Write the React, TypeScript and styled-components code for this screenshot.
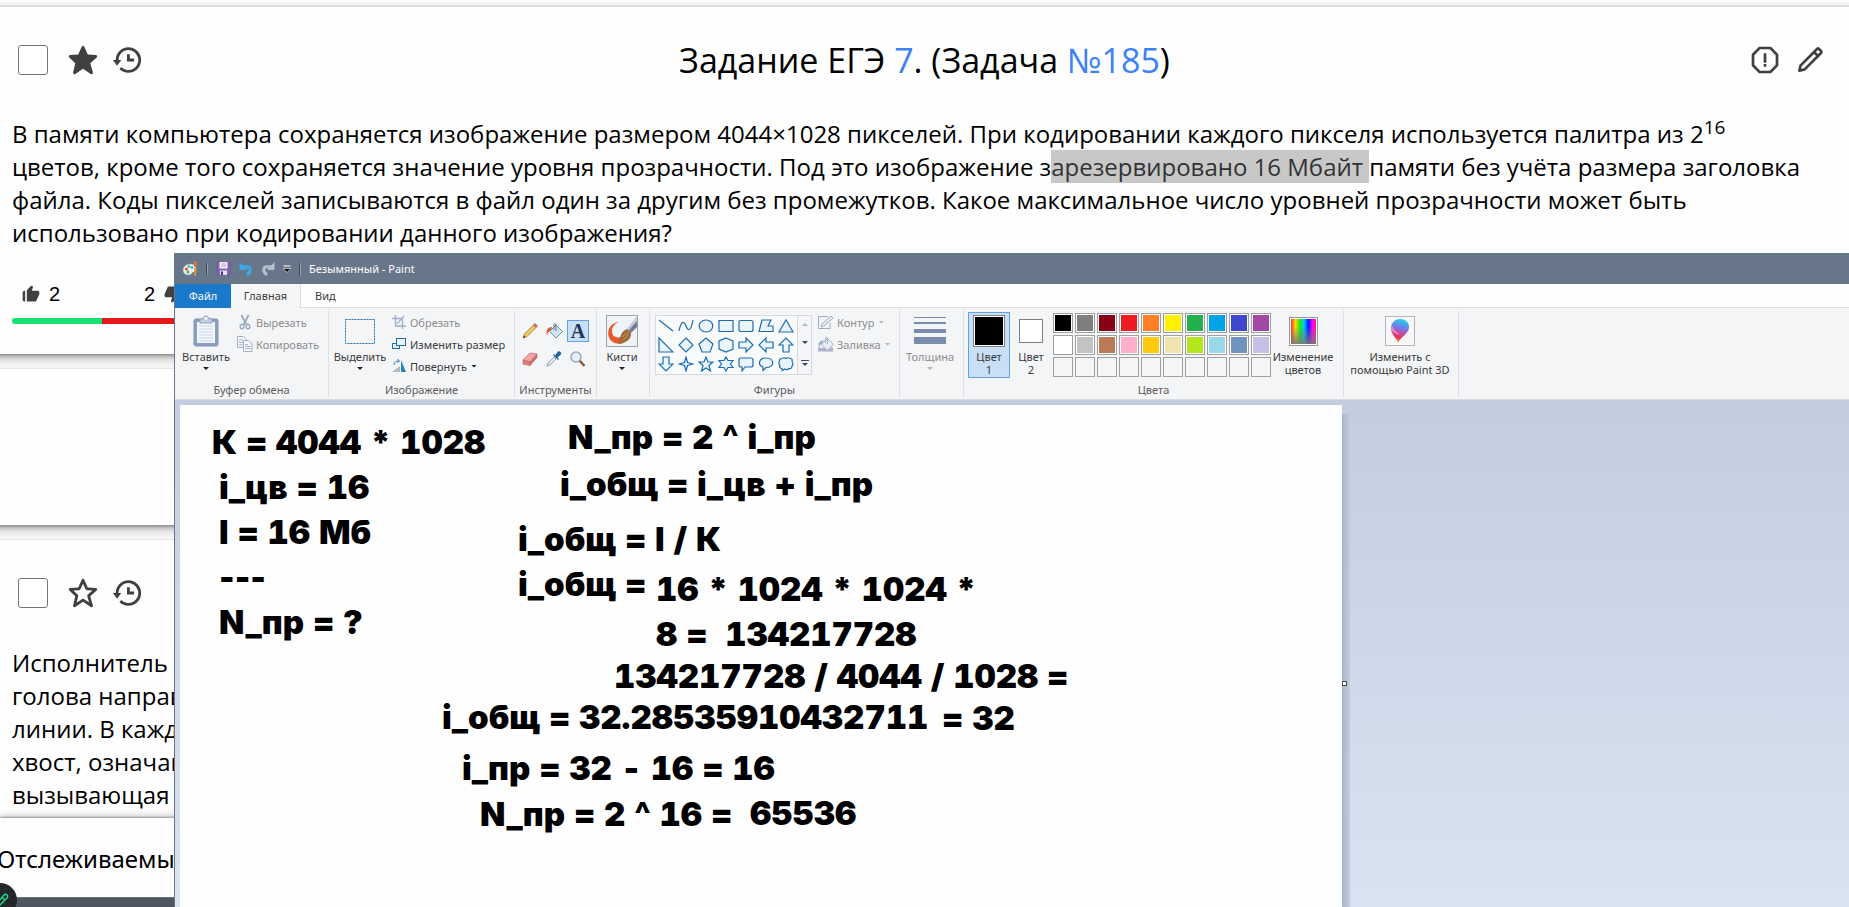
import React from "react";
import styled, { createGlobalStyle, css } from "styled-components";
import {
  BiSolidStar,
  BiStar,
  BiHistory,
  BiErrorAlt,
  BiPencil,
  BiSolidLike,
  BiSolidDislike,
} from "react-icons/bi";

const GlobalStyle = createGlobalStyle`
  * { box-sizing: border-box; }
  body { margin: 0; background: #fff; font-family: "Noto Sans", sans-serif; color: #000; }
  button { font: inherit; color: inherit; background: none; border: 0; padding: 0; margin: 0; }
`;

/* ---------- task list page ---------- */

const Page = styled.div`
  position: relative;
  height: 100vh;
  overflow: hidden;
  background: #fefefe;
`;

const TopEdge = styled.div`
  height: 7px;
  background: linear-gradient(#fdfdfd, #f0f0f0 5px, #d8d8d8 6px);
`;

const CardGap = styled.div`
  height: 15px;
  background: linear-gradient(#8e8e8e, #c4c4c4 3px, #e2e2e2 6px, #f6f6f6 12px, #f2f2f2 14px, #dcdcdc);
`;

const Card = styled.article<{ $minHeight?: number }>`
  min-height: ${(p) => p.$minHeight ?? 0}px;
  background: #fefefe;
`;

const CardHeader = styled.header`
  display: grid;
  grid-template-columns: 1fr auto 1fr;
  align-items: center;
  height: 106px;
  padding: 0 18px;
`;

const HeaderTools = styled.div`
  display: flex;
  align-items: center;
  gap: 10px;
`;

const RightTools = styled(HeaderTools)`
  justify-content: flex-end;
  gap: 13px;
  padding-right: 5px;
`;

const CheckBox = styled.input`
  appearance: none;
  width: 30px;
  height: 30px;
  margin: 0 8px 0 0;
  border: 1px solid #767676;
  border-radius: 3px;
  background: #fff;
`;

const IconButton = styled.button`
  display: flex;
  color: #404040;
`;

const Title = styled.h1`
  margin: 0;
  font-family: "Open Sans", "Noto Sans", sans-serif;
  font-size: 34px;
  line-height: 44px;
  font-weight: 400;
`;

const TaskLink = styled.a`
  color: #3b82f6;
  text-decoration: none;
`;

const TaskText = styled.p`
  margin: 0;
  padding: 0 30px 0 12px;
  font-family: "Open Sans", "Noto Sans", sans-serif;
  font-size: 24px;
  line-height: 33px;

  sup { font-size: 19px; line-height: 29px; }
`;

const Marked = styled.mark`
  background: #c8c8c8;
  color: #333;
`;

const Line = styled.span`
  display: block;
  white-space: nowrap;
`;

const Votes = styled.div`
  width: 180px;
  margin: 33px 0 0 12px;
  font: 20px/24px "Liberation Sans", sans-serif;
`;

const VoteRow = styled.div`
  display: flex;
  justify-content: space-between;
  padding: 0 9px;
  margin-bottom: 12px;
`;

const Vote = styled.button`
  display: flex;
  align-items: center;
  gap: 8px;
  svg { color: #404040; }
`;

const VoteBar = styled.div`
  height: 6px;
  border-radius: 3px;
  background: linear-gradient(90deg, #19e070 50%, #e01818 50%);
`;

const TrackedPanel = styled.footer`
  position: absolute;
  left: 0;
  right: 0;
  bottom: 0;
  background: #fefefe;
  box-shadow: 0 -1px 2px #999, 0 -2px 8px #ccc;
`;

const TrackedLabel = styled.div`
  height: 79px;
  padding-top: 24px;
  margin-left: -3px;
  font-size: 24px;
  line-height: 33px;
  white-space: nowrap;
`;

const DarkStrip = styled.div`
  height: 10px;
  background: #4f5660;
  border-top: 1px solid #6e747c;
`;

const RoundButton = styled.button`
  position: absolute;
  left: -17px;
  bottom: -10px;
  width: 34px;
  height: 34px;
  border-radius: 50%;
  background: #23262b;
  svg { display: block; margin-left: 11px; }
`;

/* ---------- paint window ---------- */

const PaintWindow = styled.section`
  position: absolute;
  left: 174px;
  top: 253px;
  right: 0;
  bottom: 0;
  display: flex;
  flex-direction: column;
  overflow: hidden;
  border-left: 1px solid #687689;
  background: #fefefe;
  font-size: 11px;
  line-height: 13px;
  color: #3b3b3b;
`;

const TitleBar = styled.div`
  display: flex;
  align-items: center;
  gap: 8px;
  flex: none;
  height: 31px;
  padding-left: 8px;
  background: #687689;
  color: #fff;
`;

const QuickButton = styled.button`
  display: flex;
`;

const Divider = styled.span`
  width: 2px;
  height: 12px;
  border-left: 1px solid #3e4753;
  border-right: 1px solid #97a1ae;
`;

const Tabs = styled.nav`
  display: flex;
  flex: none;
  height: 24px;
  border-bottom: 1px solid #dadbdc;
`;

const Tab = styled.button<{ $kind?: "file" | "active" }>`
  height: 24px;
  padding: 0 14px 2px;
  ${(p) =>
    p.$kind === "file" &&
    css`
      width: 56px;
      padding: 0 0 2px;
      background: #1979ca;
      color: #fff;
    `}
  ${(p) =>
    p.$kind === "active" &&
    css`
      width: 70px;
      padding: 0 0 2px;
      background: #f5f6f7;
      border-right: 1px solid #dadbdc;
    `}
`;

const Ribbon = styled.div`
  display: flex;
  flex: none;
  height: 92px;
  padding: 2px 0;
  background: #f4f5f7;
  border-bottom: 1px solid #d9dbdd;
  white-space: nowrap;
`;

const Group = styled.div<{ $width: number }>`
  display: flex;
  flex-direction: column;
  flex: none;
  width: ${(p) => p.$width}px;
  border-right: 1px solid #dfe1e4;
`;

const GroupBody = styled.div<{ $pad?: number }>`
  display: flex;
  height: 73px;
  padding-left: ${(p) => p.$pad ?? 0}px;
`;

const GroupLabel = styled.div`
  text-align: center;
  color: #5c5c5c;
`;

const BigButton = styled.button<{ $width: number; $selected?: boolean; $muted?: boolean }>`
  display: flex;
  flex-direction: column;
  align-items: center;
  flex: none;
  width: ${(p) => p.$width}px;
  height: 66px;
  margin-top: 2px;
  padding-top: 2px;
  border: 1px solid ${(p) => (p.$selected ? "#62a2e4" : "transparent")};
  background: ${(p) => (p.$selected ? "#c9dff5" : "none")};
  color: ${(p) => (p.$muted ? "#8d8d8d" : "inherit")};
`;

const BigIcon = styled.span`
  display: flex;
  align-items: center;
  justify-content: center;
  height: 32px;
  margin-bottom: 3px;
`;

const SmallColumn = styled.div<{ $pad?: number }>`
  display: flex;
  flex-direction: column;
  padding-top: 1px;
  padding-left: ${(p) => p.$pad ?? 0}px;
`;

const SmallButton = styled.button<{ $muted?: boolean }>`
  display: flex;
  align-items: center;
  gap: 3px;
  height: 22px;
  color: ${(p) => (p.$muted ? "#8d8d8d" : "inherit")};
`;

const IconSlot = styled.span`
  display: flex;
  justify-content: center;
  width: 16px;
`;

const Caret = styled.span<{ $muted?: boolean }>`
  margin-left: 1px;
  width: 6px;
  height: 3px;
  background: ${(p) => (p.$muted ? "#b5b5b5" : "#222")};
  clip-path: polygon(0 0, 100% 0, 50% 100%);
  ${BigButton} & { margin: 4px 0 0; }
`;

const ToolGrid = styled.div`
  display: grid;
  grid-template-columns: repeat(3, 22px);
  grid-auto-rows: 22px;
  gap: 6px 2px;
  padding-top: 10px;
`;

const ToolButton = styled.button<{ $selected?: boolean }>`
  display: flex;
  align-items: center;
  justify-content: center;
  border: 1px solid ${(p) => (p.$selected ? "#62a2e4" : "transparent")};
  background: ${(p) => (p.$selected ? "#c9dff5" : "none")};
`;

const LetterA = styled.span`
  font: bold 20px/20px "Liberation Serif", serif;
  color: #1c3556;
`;

const Gallery = styled.div`
  display: flex;
  width: 157px;
  height: 60px;
  margin-top: 5px;
  border: 1px solid #d8dade;
  background: #f9fafc;
`;

const ShapeGrid = styled.div`
  display: grid;
  grid-template-columns: repeat(7, 20px);
  grid-auto-rows: 19px;
  width: 142px;
`;

const ShapeButton = styled.button`
  display: flex;
  align-items: center;
  justify-content: center;
`;

const GalleryScroll = styled.div`
  display: flex;
  flex-direction: column;
  justify-content: space-around;
  align-items: center;
  width: 14px;
  border-left: 1px solid #d8dade;
  background: #f4f5f7;
`;

const ColorBox = styled.span<{ $size: number; $color: string }>`
  width: ${(p) => p.$size}px;
  height: ${(p) => p.$size}px;
  border: 1px solid #808080;
  background: ${(p) => p.$color};
  box-shadow: inset 0 0 0 1px #fff;
`;

const Palette = styled.div`
  display: grid;
  grid-template-columns: repeat(10, 20px);
  grid-auto-rows: 20px;
  gap: 2px;
  padding-top: 3px;
  margin-left: 1px;
`;

const Swatch = styled.button<{ $color?: string }>`
  border: 1px solid #a0a0a0;
  ${(p) =>
    p.$color &&
    css`
      background: ${p.$color};
      box-shadow: inset 0 0 0 1px #fff;
    `}
`;

const Workspace = styled.div`
  flex: 1;
  min-height: 0;
  overflow: hidden;
  padding: 5px 0 0 5px;
  background: linear-gradient(#c4cddf, #d9e3f1);
`;

const Canvas = styled.div`
  position: relative;
  width: 1162px;
  height: 557px;
  background: #fefefe;
  color: #000;
  font: 900 33px/45px Inter, "Liberation Sans", sans-serif;
  font-feature-settings: "calt" 0;
`;

const CanvasShade = styled.div`
  position: absolute;
  left: 100%;
  top: 9px;
  bottom: 0;
  width: 8px;
  background: linear-gradient(90deg, #a8b6ca, #c3cddd);
`;

const Handle = styled.div`
  position: absolute;
  left: 100%;
  top: 276px;
  width: 5px;
  height: 5px;
  border: 1px solid #444;
  background: #fff;
`;

const Note = styled.div<{ $x: number; $y: number; $proportional?: boolean }>`
  position: absolute;
  left: ${(p) => p.$x}px;
  top: ${(p) => p.$y}px;
  white-space: pre;
  font-variant-numeric: ${(p) => (p.$proportional ? "normal" : "tabular-nums")};
`;

/* ---------- icons ---------- */

const PaintLogo = () => (
  <svg width="15" height="16" viewBox="0 0 15 16">
    <path d="M7 3c4 0 6 2 6 5s-2 3-3 3-1 3-4 3c-4 0-6-2-6-5s3-6 7-6z" fill="#e9f2f8" stroke="#7ba7c6" strokeWidth=".6" />
    <circle cx="3.500" cy="8" r="1.500" fill="#e6452c" />
    <circle cx="6" cy="5.500" r="1.300" fill="#4fb04a" />
    <circle cx="5" cy="11" r="1.500" fill="#4fb04a" />
    <circle cx="9" cy="6.500" r="1.200" fill="#2e8fd8" />
    <path d="M11 7h2.500l-.5 8h-1.500z" fill="#f0922c" />
    <path d="M10.500 0h3.500l-.7 6h-2z" fill="#c97a3a" />
  </svg>
);

const SaveIcon = () => (
  <svg width="15" height="15" viewBox="0 0 15 15">
    <path d="M1 1h13v13H2l-1-1z" fill="#8a62b8" stroke="#7450a4" />
    <path d="M3.500 1h8v6.500h-8z" fill="#f1edf6" />
    <path d="M5 3h5M5 5h5" stroke="#b9a8cf" />
    <path d="M4 9.500h7V14H4z" fill="#e4e4ea" />
    <path d="M5 10.500h2V14H5z" fill="#4c3370" />
  </svg>
);

const UndoIcon = ({ redo }: { redo?: boolean }) => (
  <svg width="14" height="14" viewBox="0 0 14 14">
    <g transform={redo ? "matrix(-1 0 0 1 14 0)" : undefined}>
      <path d="M3 4.800h5c4 0 4.500 5 0 8" fill="none" stroke={redo ? "#b4c0ce" : "#3aa9ee"} strokeWidth="3" />
      <path d="M.5 0v8H8z" fill={redo ? "#b4c0ce" : "#3aa9ee"} />
    </g>
  </svg>
);

const MenuIcon = () => (
  <svg width="8" height="8" viewBox="0 0 8 8">
    <path d="M.5 1h7" stroke="#fff" />
    <path d="M0 3.500h8L4 7.500z" fill="#111" stroke="#fff" strokeWidth=".6" />
  </svg>
);

const PasteIcon = () => (
  <svg width="26" height="32" viewBox="0 0 26 32">
    <rect x="1" y="4" width="24" height="27" rx="2" fill="#8c9fc0" stroke="#8194b6" />
    <path d="M4 7h18v21H4z" fill="#f3f7fc" />
    <path d="M6 11h14M6 14h14M6 17h14M6 20h14M6 23h14M6 26h14" stroke="#c9d6e8" />
    <path d="M7 8V4h3c0-4 6-4 6 0h3v4z" fill="#c4cfdf" stroke="#93a3bd" />
    <circle cx="13" cy="3.500" r="1.300" fill="#fff" />
  </svg>
);

const CutIcon = () => (
  <svg width="14" height="16" viewBox="0 0 14 16" fill="none" stroke="#9aa8c0">
    <path d="M3.500 1l5 10M10.500 1l-5 10" strokeWidth="1.700" />
    <ellipse cx="4" cy="12.500" rx="1.800" ry="2.300" strokeWidth="1.400" />
    <ellipse cx="10" cy="12.500" rx="1.800" ry="2.300" strokeWidth="1.400" />
  </svg>
);

const CopyIcon = () => (
  <svg width="16" height="16" viewBox="0 0 16 16" fill="#f6f8fb" stroke="#a3b1c9">
    <path d="M.5.500h6l3 3v8h-9z" />
    <path d="M2 4h4M2 6.500h4M2 9h4" />
    <path d="M6.500 4.500h5l3.500 3v8H6.500z" />
    <path d="M8 8.500h3M8 10.500h5.500M8 12.500h5.500" />
  </svg>
);

const SelectIcon = () => (
  <svg width="30" height="25" viewBox="0 0 30 25">
    <rect x=".5" y=".5" width="29" height="24" fill="none" stroke="#1c6db2" strokeDasharray="2 1" />
  </svg>
);

const CropIcon = () => (
  <svg width="14" height="14" viewBox="0 0 14 14" fill="none" stroke="#a3b1c9" strokeWidth="1.400">
    <path d="M3.500 0v11H14M0 3.500h10.500V14M5 9l7-8" />
  </svg>
);

const ResizeIcon = () => (
  <svg width="14" height="14" viewBox="0 0 14 14" fill="#e8f3fb" stroke="#1c6db2">
    <rect x=".5" y="6.500" width="7" height="5" />
    <rect x="4.500" y="1.500" width="9" height="7" />
  </svg>
);

const RotateIcon = () => (
  <svg width="15" height="14" viewBox="0 0 15 14">
    <path d="M0 13l8-6v6z" fill="#b4b8bd" />
    <path d="M9 1l5 12H9z" fill="#2383c4" />
    <path d="M2 6c0-3 2-4 5-4M5.500 0l2 2-2 2" fill="none" stroke="#2b7fc4" />
  </svg>
);

const PencilTool = () => (
  <svg width="16" height="16" viewBox="0 0 16 16">
    <path d="M1 15l1.500-4L11.500 2l2.500 2.500-9 9z" fill="#f4c95d" stroke="#9a6f2a" strokeWidth=".8" />
    <path d="M11.500 2l1.500-1.500 2.500 2.500L14 4.500z" fill="#dd6f6f" stroke="#9a4a4a" strokeWidth=".6" />
    <path d="M1 15l1-2.500L3.500 14z" fill="#333" />
  </svg>
);

const FillTool = ({ muted }: { muted?: boolean }) => (
  <svg width="17" height="16" viewBox="0 0 17 16">
    {muted && <path d="M0 12h16v4H0z" fill="#a9b6cc" />}
    <path d="M3.500 8.500l6.500-6.500 6.500 6.500L10 15z" fill={muted ? "#e8edf4" : "#cfe3f3"} stroke={muted ? "#9dacc4" : "#6b8fae"} />
    <path d="M8 7V1.500c0-1 2-1 2 0V8" fill="none" stroke={muted ? "#9dacc4" : "#60788f"} />
    <path d="M6 4C1 4 0 8 1 13c1-4 2-5 4-6z" fill={muted ? "#9dacc4" : "#e2552b"} />
  </svg>
);

const EraserTool = () => (
  <svg width="16" height="14" viewBox="0 0 16 14" stroke="#b86464" strokeWidth=".7">
    <path d="M1 8l7-7 7 1-7 8z" fill="#f2a7a5" />
    <path d="M1 8l7 2v3.500L1 12z" fill="#e57f7d" />
    <path d="M8 10l7-8v3.500l-7 8z" fill="#d96d6b" />
  </svg>
);

const PickerTool = () => (
  <svg width="16" height="16" viewBox="0 0 16 16">
    <path d="M1 15l1-3 6-6 2 2-6 6z" fill="#dce9f4" stroke="#7d93a8" strokeWidth=".8" />
    <path d="M7 4l5 5 1-1-1.500-1.500 3.500-3c1-2-1.500-4-3-3L9 4.500 8 3z" fill="#24629c" />
  </svg>
);

const ZoomTool = () => (
  <svg width="16" height="16" viewBox="0 0 16 16">
    <path d="M9.500 9.500l5 5.500" stroke="#8a5a35" strokeWidth="2.600" />
    <circle cx="6" cy="6" r="5" fill="#e3f0fb" stroke="#9aa5b1" strokeWidth="1.400" />
  </svg>
);

const BrushIcon = () => (
  <svg width="32" height="32" viewBox="0 0 32 32">
    <rect x=".5" y=".5" width="31" height="31" fill="#eef3f7" stroke="#a0a4a9" />
    <path d="M13 7C5 8 1 14 2.500 21c2 7 9 9 15 7l-1-7c-5 3-10 1-10.500-4-.5-4 2-8 7-10z" fill="#e8582a" />
    <path d="M31 2v10l-6 6-4-4z" fill="#6f7d92" />
    <path d="M31 2L21 14l1.500 1.500L31 6z" fill="#c6d0dc" />
    <path d="M21 14l4 4c1 6-5 10-13 11 3-3 1-5 3-9 1-3 3-5 6-6z" fill="#9b6c3c" />
    <path d="M16 22l6-5M17 25l6-6" stroke="#c4975f" />
  </svg>
);

const OutlineIcon = () => (
  <svg width="16" height="14" viewBox="0 0 16 14" fill="none" stroke="#9dacc4">
    <path d="M10 1.500H.5v12H12V8" />
    <path d="M3 12l1-3 9-8 2 2-9 8z" fill="#e8edf4" />
  </svg>
);

const ThicknessIcon = () => (
  <svg width="32" height="28" viewBox="0 0 32 28" fill="#7a8cad">
    <path d="M0 0h32v1H0zM0 5h32v2H0zM0 12h32v4H0zM0 20h32v7H0z" />
  </svg>
);

const SpectrumIcon = () => (
  <svg width="29" height="29" viewBox="0 0 29 29">
    <defs>
      <linearGradient id="hue">
        <stop offset="0" stopColor="#f33" />
        <stop offset=".18" stopColor="#fd0" />
        <stop offset=".36" stopColor="#1e1" />
        <stop offset=".52" stopColor="#0cf" />
        <stop offset=".7" stopColor="#11f" />
        <stop offset=".86" stopColor="#f0f" />
        <stop offset="1" stopColor="#f26" />
      </linearGradient>
      <linearGradient id="fade" x2="0" y2="1">
        <stop offset=".3" stopColor="#777" stopOpacity="0" />
        <stop offset="1" stopColor="#777" stopOpacity=".9" />
      </linearGradient>
    </defs>
    <rect x=".5" y=".5" width="28" height="28" fill="#fff" stroke="#999" />
    <rect x="2" y="2" width="25" height="25" fill="url(#hue)" />
    <rect x="2" y="2" width="25" height="25" fill="url(#fade)" />
  </svg>
);

const Paint3DIcon = () => (
  <svg width="30" height="30" viewBox="0 0 30 30">
    <defs>
      <linearGradient id="drop" x1=".6" x2=".4" y2="1">
        <stop offset="0" stopColor="#1fd3e6" />
        <stop offset=".35" stopColor="#6f7df0" />
        <stop offset=".6" stopColor="#d0439a" />
        <stop offset=".8" stopColor="#e8344e" />
        <stop offset="1" stopColor="#ffc020" />
      </linearGradient>
    </defs>
    <rect x=".5" y=".5" width="29" height="29" fill="#f7f7f7" stroke="#b5b5b5" />
    <path d="M15 3c6 0 9 4 9 8 0 7-8 9-11 16-1-5-7-8-7-15 0-5 4-9 9-9z" fill="url(#drop)" />
    <path d="M7 9c1 4 5 8 8 9-3 1-7-1-9-5z" fill="#f2a0e4" opacity=".7" />
  </svg>
);

const shapePaths: [string, string][] = [
  ["Линия", "M1 2l14 11"],
  ["Кривая", "M1 13C3 3 6 2 8 8s5 5 7-6"],
  ["Овал", "M8 2c9 0 9 12 0 12S-1 2 8 2z"],
  ["Прямоугольник", "M1 2.500h14v11H1z"],
  ["Скругленный прямоугольник", "M3 2.500h10q2 0 2 2v7q0 2-2 2H3q-2 0-2-2v-7q0-2 2-2z"],
  ["Многоугольник", "M4 2h9l-3 6h5v5.500H1z"],
  ["Треугольник", "M8 2l7 12H1z"],
  ["Прямоугольный треугольник", "M1 1v14h14z"],
  ["Ромб", "M8 1l7 7-7 7-7-7z"],
  ["Пятиугольник", "M8 1l7 6-3 8H4L1 7z"],
  ["Шестиугольник", "M8 1l7 3v8l-7 3-7-3V4z"],
  ["Стрелка вправо", "M1 5h7V1l7 7-7 7v-4H1z"],
  ["Стрелка влево", "M15 5H8V1L1 8l7 7v-4h7z"],
  ["Стрелка вверх", "M5 15V8H1l7-7 7 7h-4v7z"],
  ["Стрелка вниз", "M5 1v7H1l7 7 7-7h-4V1z"],
  ["Четырехконечная звезда", "M8 1l1.500 5.500L15 8l-5.500 1.500L8 15l-1.500-5.500L1 8l5.500-1.500z"],
  ["Пятиконечная звезда", "M8 1l2 5h5l-4 3.500 1.500 5.500L8 12l-4.500 3L5 9.500 1 6h5z"],
  ["Шестиконечная звезда", "M8 1l2 3.500h5L12.500 8l2.500 3.500h-5L8 15l-2-3.500H1L3.500 8 1 4.500h5z"],
  ["Прямоугольная выноска", "M3 2h10q2 0 2 2v5q0 2-2 2H7l-3 4v-4H3q-2 0-2-2V4q0-2 2-2z"],
  ["Овальная выноска", "M8 2c9 0 9 9.500 0 9.500L5 14.500V11C-1 8.500 1 2 8 2z"],
  ["Выноска-облако", "M4 2.500q2-1.500 4 0 2-1.500 4 0 3 0 2 3 2 2.500 0 4.500 0 3-3 2.500-2 2-4 .5l-3 1.500v-2q-3 0-2-3-2-2-.5-4Q1 2.500 4 2.500z"],
];

const paletteColors: (string | undefined)[] = [
  "#000", "#7f7f7f", "#880015", "#ed1c24", "#ff7f27", "#fff200", "#22b14c", "#00a2e8", "#3f48cc", "#a349a4",
  "#fff", "#c3c3c3", "#b97a57", "#ffaec9", "#ffc90e", "#efe4b0", "#b5e61d", "#99d9ea", "#7092be", "#c8bfe7",
  ...Array<undefined>(10).fill(undefined),
];

const notes: { x: number; y: number; text: string; proportional?: boolean }[] = [
  { x: 32, y: 15, text: "К = 4044 * 1028" },
  { x: 39, y: 60, text: "i_цв = 16\nI = 16 Мб" },
  { x: 39, y: 150, text: "---", proportional: true },
  { x: 39, y: 195, text: "N_пр = ?" },
  { x: 388, y: 10, text: "N_пр = 2 ^ i_пр" },
  { x: 380, y: 57, text: "i_общ = i_цв + i_пр" },
  { x: 338, y: 112, text: "i_общ = I / К\ni_общ =" },
  { x: 476, y: 162, text: "16 * 1024 * 1024 *\n8 =  134217728" },
  { x: 434, y: 249, text: "134217728 / 4044 / 1028 =" },
  { x: 262, y: 290, text: "i_общ = 32.28535910432711" },
  { x: 762, y: 291, text: "= 32" },
  { x: 282, y: 341, text: "i_пр = 32 - 16 = 16" },
  { x: 300, y: 387, text: "N_пр = 2 ^ 16 =" },
  { x: 570, y: 386, text: "65536" },
];

const TaskTools = ({ id, starred }: { id: string; starred?: boolean }) => (
  <HeaderTools>
    <CheckBox type="checkbox" id={id} aria-label="Выбрать задачу" />
    <IconButton aria-label="Избранное">{starred ? <BiSolidStar size={34} /> : <BiStar size={34} />}</IconButton>
    <IconButton aria-label="История"><BiHistory size={34} /></IconButton>
  </HeaderTools>
);

export default function App() {
  return (
    <Page>
      <GlobalStyle />
      <TopEdge />
      <Card $minHeight={347}>
        <CardHeader>
          <TaskTools id="task-185" starred />
          <Title>
            Задание ЕГЭ <TaskLink href="#type-7">7</TaskLink>. (Задача <TaskLink href="#task-185">№185</TaskLink>)
          </Title>
          <RightTools>
            <IconButton aria-label="Сообщить об ошибке"><BiErrorAlt size={32} /></IconButton>
            <IconButton aria-label="Редактировать"><BiPencil size={32} /></IconButton>
          </RightTools>
        </CardHeader>
        <TaskText>
          В памяти компьютера сохраняется изображение размером 4044×1028 пикселей. При кодировании каждого
          пикселя используется палитра из 2<sup>16</sup> цветов, кроме того сохраняется значение уровня
          прозрачности. Под это изображение з<Marked>арезервировано 16 Мбайт </Marked>памяти без учёта размера
          заголовка файла. Коды пикселей записываются в файл один за другим без промежутков. Какое максимальное
          число уровней прозрачности может быть использовано при кодировании данного изображения?
        </TaskText>
        <Votes>
          <VoteRow>
            <Vote><BiSolidLike size={20} />2</Vote>
            <Vote>2<BiSolidDislike size={20} /></Vote>
          </VoteRow>
          <VoteBar />
        </Votes>
      </Card>
      <CardGap />
      <Card $minHeight={156} />
      <CardGap />
      <Card>
        <CardHeader><TaskTools id="task-next" /></CardHeader>
        <TaskText>
          <Line>Исполнитель</Line>
          <Line>голова направлена</Line>
          <Line>линии. В каждый</Line>
          <Line>хвост, означающий</Line>
          <Line>вызывающая</Line>
        </TaskText>
      </Card>

      <TrackedPanel>
        <TrackedLabel>Отслеживаемые</TrackedLabel>
        <DarkStrip />
        <RoundButton aria-label="Рисовать">
          <svg width="22" height="22" viewBox="0 0 22 22" fill="none" stroke="#19e080" strokeWidth="1.400">
            <path d="M2 15l8-9c2-2 5 1 3 3l-8 8H2zM8 8l3 3M2 19.500h12" />
          </svg>
        </RoundButton>
      </TrackedPanel>

      <PaintWindow>
        <TitleBar>
          <QuickButton aria-label="Paint"><PaintLogo /></QuickButton>
          <Divider />
          <QuickButton aria-label="Сохранить"><SaveIcon /></QuickButton>
          <QuickButton aria-label="Отменить"><UndoIcon /></QuickButton>
          <QuickButton aria-label="Вернуть"><UndoIcon redo /></QuickButton>
          <QuickButton aria-label="Настройка панели"><MenuIcon /></QuickButton>
          <Divider />
          <span>Безымянный - Paint</span>
        </TitleBar>
        <Tabs>
          <Tab $kind="file">Файл</Tab>
          <Tab $kind="active">Главная</Tab>
          <Tab>Вид</Tab>
        </Tabs>
        <Ribbon>
          <Group $width={154}>
            <GroupBody>
              <BigButton $width={62}>
                <BigIcon><PasteIcon /></BigIcon>Вставить<Caret />
              </BigButton>
              <SmallColumn>
                <SmallButton $muted><IconSlot><CutIcon /></IconSlot>Вырезать</SmallButton>
                <SmallButton $muted><IconSlot><CopyIcon /></IconSlot>Копировать</SmallButton>
              </SmallColumn>
            </GroupBody>
            <GroupLabel>Буфер обмена</GroupLabel>
          </Group>
          <Group $width={186}>
            <GroupBody>
              <BigButton $width={62}>
                <BigIcon><SelectIcon /></BigIcon>Выделить<Caret />
              </BigButton>
              <SmallColumn>
                <SmallButton $muted><IconSlot><CropIcon /></IconSlot>Обрезать</SmallButton>
                <SmallButton><IconSlot><ResizeIcon /></IconSlot>Изменить размер</SmallButton>
                <SmallButton><IconSlot><RotateIcon /></IconSlot>Повернуть<Caret /></SmallButton>
              </SmallColumn>
            </GroupBody>
            <GroupLabel>Изображение</GroupLabel>
          </Group>
          <Group $width={82}>
            <GroupBody $pad={4}>
              <ToolGrid>
                <ToolButton aria-label="Карандаш"><PencilTool /></ToolButton>
                <ToolButton aria-label="Заливка цветом"><FillTool /></ToolButton>
                <ToolButton aria-label="Текст" $selected><LetterA>A</LetterA></ToolButton>
                <ToolButton aria-label="Ластик"><EraserTool /></ToolButton>
                <ToolButton aria-label="Палитра"><PickerTool /></ToolButton>
                <ToolButton aria-label="Масштаб"><ZoomTool /></ToolButton>
              </ToolGrid>
            </GroupBody>
            <GroupLabel>Инструменты</GroupLabel>
          </Group>
          <Group $width={53}>
            <BigButton $width={50}>
              <BigIcon><BrushIcon /></BigIcon>Кисти<Caret />
            </BigButton>
          </Group>
          <Group $width={250}>
            <GroupBody $pad={5}>
              <Gallery>
                <ShapeGrid>
                  {shapePaths.map(([name, d], i) => (
                    <ShapeButton key={name} aria-label={name}>
                      <svg width="16" height="16" viewBox="0 0 16 16">
                        <path d={d} fill={i < 2 ? "none" : "#eaf4fb"} stroke="#1c6db2" strokeWidth="1.200" />
                      </svg>
                    </ShapeButton>
                  ))}
                </ShapeGrid>
                <GalleryScroll>
                  <svg width="6" height="4"><path d="M0 3l3-3 3 3z" fill="#b3b8c0" /></svg>
                  <svg width="6" height="4"><path d="M0 0h6L3 3z" fill="#3b4a66" /></svg>
                  <svg width="8" height="7"><path d="M0 0h8v1H0zM1 3h6L4 6z" fill="#3b4a66" /></svg>
                </GalleryScroll>
              </Gallery>
              <SmallColumn $pad={6}>
                <SmallButton $muted><IconSlot><OutlineIcon /></IconSlot>Контур<Caret $muted /></SmallButton>
                <SmallButton $muted><IconSlot><FillTool muted /></IconSlot>Заливка<Caret $muted /></SmallButton>
              </SmallColumn>
            </GroupBody>
            <GroupLabel>Фигуры</GroupLabel>
          </Group>
          <Group $width={64}>
            <BigButton $width={60} $muted>
              <BigIcon><ThicknessIcon /></BigIcon>Толщина<Caret $muted />
            </BigButton>
          </Group>
          <Group $width={380}>
            <GroupBody $pad={4}>
              <BigButton $width={42} $selected>
                <BigIcon><ColorBox $size={32} $color="#000" /></BigIcon>Цвет<span>1</span>
              </BigButton>
              <BigButton $width={42}>
                <BigIcon><ColorBox $size={24} $color="#fff" /></BigIcon>Цвет<span>2</span>
              </BigButton>
              <Palette>
                {paletteColors.map((c, i) => (
                  <Swatch key={i} $color={c} aria-label={`Цвет палитры ${i + 1}`} />
                ))}
              </Palette>
              <BigButton $width={64}>
                <BigIcon><SpectrumIcon /></BigIcon>Изменение<span>цветов</span>
              </BigButton>
            </GroupBody>
            <GroupLabel>Цвета</GroupLabel>
          </Group>
          <Group $width={115}>
            <BigButton $width={112}>
              <BigIcon><Paint3DIcon /></BigIcon>Изменить с<span>помощью Paint 3D</span>
            </BigButton>
          </Group>
        </Ribbon>
        <Workspace>
          <Canvas>
            <CanvasShade />
            <Handle />
            {notes.map((n) => (
              <Note key={n.text} $x={n.x} $y={n.y} $proportional={n.proportional}>{n.text}</Note>
            ))}
          </Canvas>
        </Workspace>
      </PaintWindow>
    </Page>
  );
}
